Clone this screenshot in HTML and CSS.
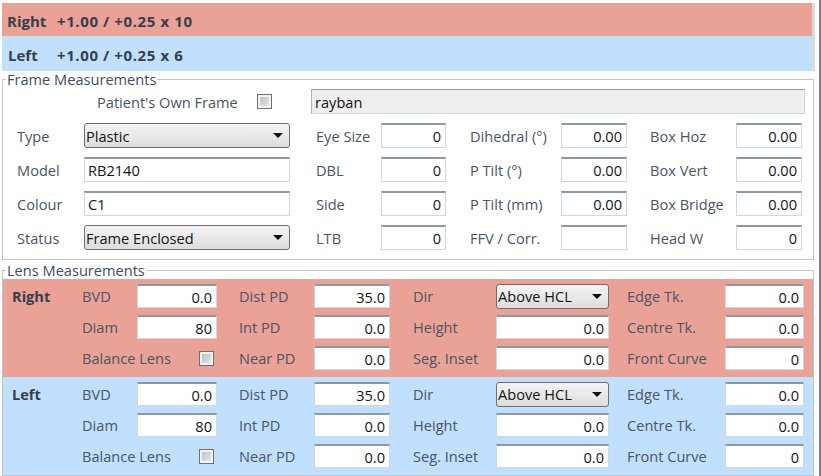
FILE: index.html
```html
<!DOCTYPE html>
<html>
	<head>
		<meta charset="UTF-8">
		<title>Frame and Lens Measurements</title>
		<link rel="stylesheet" href="styles.css">
	</head>
	<body>
		<div class="window">
			<div class="summary">
				<div class="rx rx-right">
					<span class="rx-eye">Right</span>
					<span class="rx-value">+1.00 / +0.25 x 10</span>
				</div>
				<div class="rx rx-left">
					<span class="rx-eye">Left</span>
					<span class="rx-value">+1.00 / +0.25 x 6</span>
				</div>
			</div>

			<fieldset class="group frame">
				<legend>Frame Measurements</legend>
				<div class="own-frame">
					<label class="own-label">Patient's Own Frame</label>
					<input type="checkbox" class="tick own-tick">
					<input type="text" class="field own-name" value="rayban" disabled>
				</div>
				<div class="frame-grid">
					<label>Type</label>
					<div class="combo w206"><span>Plastic</span><i class="arrow"></i></div>
					<label>Eye Size</label>
					<input type="text" class="field num w65" value="0">
					<label>Dihedral (°)</label>
					<input type="text" class="field num w66" value="0.00">
					<label>Box Hoz</label>
					<input type="text" class="field num w66" value="0.00">

					<label>Model</label>
					<input type="text" class="field w206" value="RB2140">
					<label>DBL</label>
					<input type="text" class="field num w65" value="0">
					<label>P Tilt (°)</label>
					<input type="text" class="field num w66" value="0.00">
					<label>Box Vert</label>
					<input type="text" class="field num w66" value="0.00">

					<label>Colour</label>
					<input type="text" class="field w206" value="C1">
					<label>Side</label>
					<input type="text" class="field num w65" value="0">
					<label>P Tilt (mm)</label>
					<input type="text" class="field num w66" value="0.00">
					<label>Box Bridge</label>
					<input type="text" class="field num w66" value="0.00">

					<label>Status</label>
					<div class="combo w206"><span>Frame Enclosed</span><i class="arrow"></i></div>
					<label>LTB</label>
					<input type="text" class="field num w65" value="0">
					<label>FFV / Corr.</label>
					<input type="text" class="field num w66" value="">
					<label>Head W</label>
					<input type="text" class="field num w66" value="0">
				</div>
			</fieldset>

			<fieldset class="group lens">
				<legend>Lens Measurements</legend>
				<div class="eye eye-right">
					<div class="eye-name">Right</div>
					<label>BVD</label>
					<input type="text" class="field num w80" value="0.0">
					<label>Dist PD</label>
					<input type="text" class="field num w76" value="35.0">
					<label>Dir</label>
					<div class="combo w113"><span>Above HCL</span><i class="arrow"></i></div>
					<label>Edge Tk.</label>
					<input type="text" class="field num w79" value="0.0">

					<div></div>
					<label>Diam</label>
					<input type="text" class="field num w80" value="80">
					<label>Int PD</label>
					<input type="text" class="field num w76" value="0.0">
					<label>Height</label>
					<input type="text" class="field num w113" value="0.0">
					<label>Centre Tk.</label>
					<input type="text" class="field num w79" value="0.0">

					<div></div>
					<label class="wide">Balance Lens</label>
					<input type="checkbox" class="tick balance-tick">
					<label>Near PD</label>
					<input type="text" class="field num w76" value="0.0">
					<label>Seg. Inset</label>
					<input type="text" class="field num w113" value="0.0">
					<label>Front Curve</label>
					<input type="text" class="field num w79" value="0">
				</div>
				<div class="eye eye-left">
					<div class="eye-name">Left</div>
					<label>BVD</label>
					<input type="text" class="field num w80" value="0.0">
					<label>Dist PD</label>
					<input type="text" class="field num w76" value="35.0">
					<label>Dir</label>
					<div class="combo w113"><span>Above HCL</span><i class="arrow"></i></div>
					<label>Edge Tk.</label>
					<input type="text" class="field num w79" value="0.0">

					<div></div>
					<label>Diam</label>
					<input type="text" class="field num w80" value="80">
					<label>Int PD</label>
					<input type="text" class="field num w76" value="0.0">
					<label>Height</label>
					<input type="text" class="field num w113" value="0.0">
					<label>Centre Tk.</label>
					<input type="text" class="field num w79" value="0.0">

					<div></div>
					<label class="wide">Balance Lens</label>
					<input type="checkbox" class="tick balance-tick">
					<label>Near PD</label>
					<input type="text" class="field num w76" value="0.0">
					<label>Seg. Inset</label>
					<input type="text" class="field num w113" value="0.0">
					<label>Front Curve</label>
					<input type="text" class="field num w79" value="0">
				</div>
			</fieldset>
		</div>
	</body>
</html>
```

FILE: styles.css
```css
html, body {
	margin: 0;
	padding: 0;
	background: #fff;
}
body {
	font-family: "Open Sans", "Noto Sans", sans-serif;
	font-size: 14.6px;
	color: #4a5566;
}
.window {
	box-sizing: border-box;
	width: 821px;
	height: 476px;
	border-right: 2px solid #76838f;
	overflow: hidden;
}

/* prescription summary */
.summary {
	padding-top: 3px;
	margin-left: 2px;
}
.rx {
	display: flex;
	align-items: center;
	width: 813px;
	border-right: 3px solid #dadada;
	font-size: 15px;
	font-weight: bold;
	color: #363f4b;
}
.rx-right {
	height: 33px;
	padding-top: 2px;
	box-sizing: border-box;
	background: #eaa297;
}
.rx-left {
	height: 35px;
	padding-top: 2px;
	box-sizing: border-box;
	background: #c1dffe;
}
.rx-eye {
	width: 50px;
	padding-left: 5px;
}
.rx-left .rx-eye {
	padding-left: 6px;
	width: 49px;
}
.rx-value {
	letter-spacing: 0.6px;
}

/* group boxes */
.group {
	box-sizing: border-box;
	width: 812px;
	margin: 0 0 0 2px;
	border: 1px solid #c6c6c6;
	min-width: 0;
}
.group legend {
	padding: 0 1px;
	margin-left: 3px;
	line-height: 16px;
	color: #3f4e61;
}
.frame {
	padding: 2px 0 9px 0;
}
.lens {
	margin-top: 2px;
	padding: 1px 0 0 0;
}

/* controls */
.field {
	box-sizing: border-box;
	height: 25px;
	margin: 0;
	padding: 0 4px 0 3px;
	font: inherit;
	color: #141414;
	background: #fff;
	border: 1px solid #cfd7df;
	border-top: 2px solid #8a98a7;
	outline: none;
}
.num {
	text-align: right;
}
.combo {
	box-sizing: border-box;
	display: flex;
	align-items: center;
	justify-content: space-between;
	height: 25px;
	padding: 0 6px 0 1px;
	color: #141414;
	border: 1px solid #6f6f6f;
	border-radius: 3px;
	background: linear-gradient(#f4f4f4, #e9e9e9 50%, #dcdcdc);
}
.arrow {
	width: 0;
	height: 0;
	border-left: 5px solid transparent;
	border-right: 5px solid transparent;
	border-top: 5px solid #111;
}
.tick {
	appearance: none;
	-webkit-appearance: none;
	box-sizing: border-box;
	width: 15px;
	height: 15px;
	margin: 0;
	border: 1px solid #707070;
	background: linear-gradient(135deg, #b4bac1, #eceef0);
	box-shadow: inset 0 0 0 2px #f3f3f3;
}

.w65 { width: 65px; }
.w66 { width: 66px; }
.w76 { width: 76px; }
.w79 { width: 79px; }
.w80 { width: 80px; }
.w113 { width: 113px; }
.w206 { width: 206px; }

/* frame measurements */
.own-frame {
	display: flex;
	align-items: center;
	height: 25px;
	padding-left: 94px;
	margin-bottom: 9px;
}
.own-label {
	width: 143px;
	white-space: nowrap;
}
.own-tick {
	margin-left: 17px;
}
.own-name {
	width: 494px;
	margin-left: 39px;
	background: #efefef;
	border: 1px solid #cfd7df;
	border-top: 1px solid #8a98a7;
	border-left: 1px solid #a9b4bf;
}
.frame-grid {
	display: grid;
	grid-template-columns: 67px 232px 65px 89px 91px 89px 86px 66px;
	grid-auto-rows: 25px;
	row-gap: 9px;
	align-items: center;
	padding-left: 14px;
}
.frame-grid label {
	white-space: nowrap;
}

/* lens measurements */
.eye {
	display: grid;
	grid-template-columns: 79px 55px 102px 75px 99px 83px 131px 98px 79px;
	grid-auto-rows: 24px;
	row-gap: 7px;
	align-items: center;
	padding: 5px 0 7px 0;
}
.eye-right {
	background: #eaa297;
}
.eye-left {
	background: #c1dffe;
}
.eye .field {
	height: 24px;
}
.eye label {
	white-space: nowrap;
}
.eye-name {
	padding-left: 9px;
	font-weight: bold;
	color: #363f4b;
}
.balance-tick {
	margin-left: 62px;
}
```
